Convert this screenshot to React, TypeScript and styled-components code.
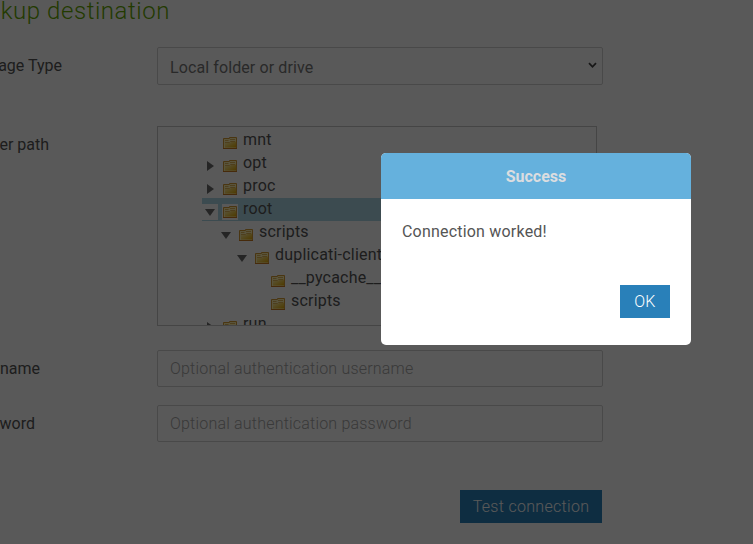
import React from 'react';
import styled, { createGlobalStyle } from 'styled-components';

const GlobalStyle = createGlobalStyle`
  * { box-sizing: border-box; }
  body { margin: 0; overflow: hidden; background: #fff; }
  body, button, input { font-family: Roboto, "Noto Sans", sans-serif; font-size: 16px; }
`;

const Page = styled.div`
  position: relative;
  width: 753px;
  height: 544px;
  overflow: hidden;
  color: #555;
`;

const Heading = styled.h2`
  display: flex;
  justify-content: flex-end;
  width: 170px;
  height: 47px;
  margin: 0;
  padding-top: 0;
  font-size: 24px;
  font-weight: 300;
  line-height: 22px;
  letter-spacing: 0.55px;
  white-space: nowrap;
  color: #64a800;
`;

const Row = styled.div<{ $gap: number }>`
  display: flex;
  align-items: flex-start;
  margin-bottom: ${p => p.$gap}px;
`;

const LabelCell = styled.div`
  width: 157px;
  flex: none;
`;

const Label = styled.label<{ $end: number; $spacing?: number }>`
  display: flex;
  justify-content: flex-end;
  width: ${p => p.$end}px;
  line-height: 37px;
  letter-spacing: ${p => p.$spacing ?? 0}px;
  white-space: nowrap;
  color: #555;
`;

const Select = styled.div`
  display: flex;
  align-items: center;
  justify-content: space-between;
  width: 446px;
  height: 38px;
  padding: 3px 5px 0 12px;
  border: 1px solid #d0d0d0;
  border-radius: 2px;
  color: #777;
  letter-spacing: 0.1px;
  svg { margin-top: -4px; }
`;

const Input = styled.input`
  width: 446px;
  height: 37px;
  padding: 0 12px;
  border: 1px solid #d0d0d0;
  border-radius: 2px;
  letter-spacing: 0.2px;
  &::placeholder { color: #a5a5a5; font-weight: 300; opacity: 1; }
`;

const Tree = styled.div`
  width: 440px;
  height: 200px;
  padding: 2px 0 0 44px;
  overflow: hidden;
  border: 1px solid #c5c5c5;
`;

const Node = styled.div<{ $depth: number; $selected?: boolean }>`
  display: flex;
  align-items: center;
  height: 23px;
  padding-left: ${p => p.$depth * 16}px;
  background: ${p => (p.$selected ? '#add8e6' : 'transparent')};
`;

const IconCell = styled.span<{ $top?: number; $gap: number }>`
  display: flex;
  align-items: center;
  justify-content: center;
  width: 16px;
  height: 16px;
  flex: none;
  margin: 4px ${p => p.$gap}px 0 0;
  background: #fff;
`;

const NodeName = styled.span<{ $spacing: number }>`
  line-height: 21px;
  margin-top: -2px;
  letter-spacing: ${p => p.$spacing}px;
  white-space: nowrap;
`;

const Button = styled.button<{ $width: number }>`
  width: ${p => p.$width}px;
  height: 33px;
  padding: 0;
  border: 0;
  background: #2980b9;
  color: #fff;
  font-weight: 300;
  letter-spacing: 0.3px;
`;

const FormActions = styled.div`
  display: flex;
  justify-content: flex-end;
  width: 602px;
`;

const Overlay = styled.div`
  position: absolute;
  inset: 0;
  padding: 153px 0 0 381px;
  background: rgba(0, 0, 0, 0.65);
`;

const Dialog = styled.section`
  width: 310px;
  height: 192px;
  overflow: hidden;
  border-radius: 5px;
  background: #fff;
`;

const DialogTitle = styled.h3`
  height: 46px;
  margin: 0;
  background: #65b1dd;
  color: #dbdde0;
  font-size: 16px;
  font-weight: 700;
  line-height: 47px;
  text-align: center;
`;

const DialogText = styled.p`
  height: 86px;
  margin: 0;
  padding: 22px 21px 0;
  line-height: 21px;
  letter-spacing: 0.2px;
`;

const DialogActions = styled.div`
  display: flex;
  justify-content: flex-end;
  padding-right: 21px;
`;

const Chevron = () => (
  <svg width="9" height="7" viewBox="0 0 9 7">
    <path d="M1 1.2 4.5 4.8 8 1.2" fill="none" stroke="#444" strokeWidth="1.8" />
  </svg>
);

const Arrow = ({ open }: { open: boolean }) => (
  <svg width="16" height="16" viewBox="0 0 16 16">
    <path d={open ? 'M3 5H13L8 12Z' : 'M5 3V13L12 8Z'} fill="#6c6c6c" />
  </svg>
);

const Folder = () => (
  <svg width="16" height="16" viewBox="0 0 16 16">
    <defs>
      <linearGradient id="folder" x1="0" y1="0" x2="1" y2="1">
        <stop offset="0" stopColor="#fff1a8" />
        <stop offset="1" stopColor="#e0a800" />
      </linearGradient>
    </defs>
    <path d="M1.5 13.5V3.5H7.5V2.5H14.5V13.5Z" fill="#ffefad" stroke="#d59b36" />
    <path d="M3 12V8H8L9 6.5H14V12.5H3Z" fill="url(#folder)" />
    <path d="M3 5.5H6.5M8 4.5H13M3 7.5H7.5L8.5 6.5H13" fill="none" stroke="#d8a541" strokeWidth=".8" />
    <path d="M1 13.5H15" stroke="#c87a22" />
  </svg>
);

type TreeItem = { name: string; depth: number; state?: 'open' | 'closed'; selected?: boolean; spacing?: number };

const items: TreeItem[] = [
  { name: 'mnt', depth: 0 },
  { name: 'opt', depth: 0, state: 'closed' },
  { name: 'proc', depth: 0, state: 'closed' },
  { name: 'root', depth: 0, state: 'open', selected: true },
  { name: 'scripts', depth: 1, state: 'open' },
  { name: 'duplicati-client', depth: 2, state: 'open' },
  { name: '__pycache__', depth: 3 },
  { name: 'scripts', depth: 3 },
  { name: 'run', depth: 0, state: 'closed' },
];

export default function App() {
  return (
    <Page>
      <GlobalStyle />
      <Heading>Backup destination</Heading>
      <Row $gap={41}>
        <LabelCell><Label $end={62}>Storage Type</Label></LabelCell>
        <Select>Local folder or drive<Chevron /></Select>
      </Row>
      <Row $gap={24}>
        <LabelCell><Label $end={49}>Folder path</Label></LabelCell>
        <Tree>
          {items.map((item, i) => (
            <Node key={i} $depth={item.depth} $selected={item.selected}>
              <IconCell $gap={4}>{item.state && <Arrow open={item.state === 'open'} />}</IconCell>
              <IconCell $gap={5}><Folder /></IconCell>
              <NodeName $spacing={item.spacing ?? 0.2}>{item.name}</NodeName>
            </Node>
          ))}
        </Tree>
      </Row>
      <Row $gap={18}>
        <LabelCell><Label $end={40}>Username</Label></LabelCell>
        <Input placeholder="Optional authentication username" />
      </Row>
      <Row $gap={48}>
        <LabelCell><Label $end={35}>Password</Label></LabelCell>
        <Input type="password" placeholder="Optional authentication password" />
      </Row>
      <FormActions><Button $width={142}>Test connection</Button></FormActions>
      <Overlay>
        <Dialog role="dialog">
          <DialogTitle>Success</DialogTitle>
          <DialogText>Connection worked!</DialogText>
          <DialogActions><Button $width={50}>OK</Button></DialogActions>
        </Dialog>
      </Overlay>
    </Page>
  );
}
